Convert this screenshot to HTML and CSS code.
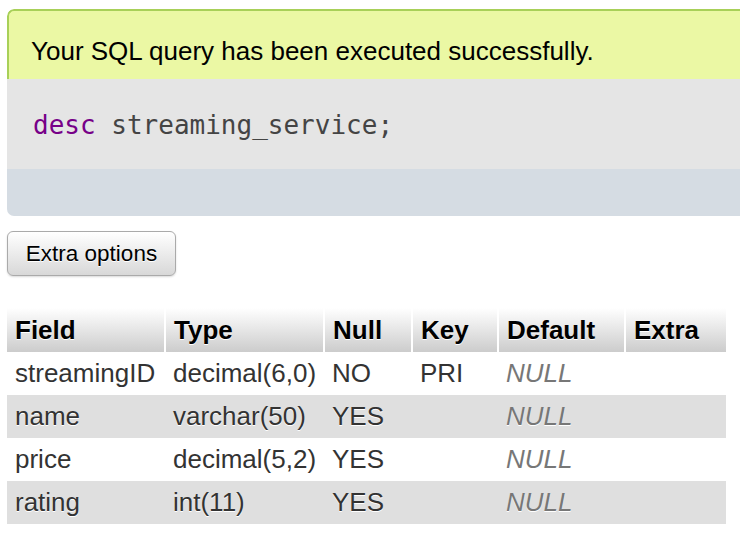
FILE: index.html
```html
<!DOCTYPE html>
<html>
<head>
<meta charset="utf-8">
<link rel="stylesheet" href="styles.css">
</head>
<body>
<div class="page">
  <div class="result">
    <div class="success">Your SQL query has been executed successfully.</div>
    <div class="sql"><div class="code"><span class="kw">desc</span> streaming_service;</div></div>
    <div class="tools"></div>
  </div>
  <button class="btn" type="button">Extra options</button>
  <table class="data">
    <thead>
      <tr>
        <th class="c-field">Field</th>
        <th class="c-type">Type</th>
        <th class="c-null">Null</th>
        <th class="c-key">Key</th>
        <th class="c-def">Default</th>
        <th class="c-extra">Extra</th>
      </tr>
    </thead>
    <tbody>
      <tr><td>streamingID</td><td>decimal(6,0)</td><td>NO</td><td>PRI</td><td class="null">NULL</td><td></td></tr>
      <tr class="even"><td>name</td><td>varchar(50)</td><td>YES</td><td></td><td class="null">NULL</td><td></td></tr>
      <tr><td>price</td><td>decimal(5,2)</td><td>YES</td><td></td><td class="null">NULL</td><td></td></tr>
      <tr class="even"><td>rating</td><td>int(11)</td><td>YES</td><td></td><td class="null">NULL</td><td></td></tr>
    </tbody>
  </table>
</div>
</body>
</html>
```

FILE: styles.css
```css
html, body {
  margin: 0;
  padding: 0;
  background: #fff;
  overflow: hidden;
}
body {
  font-family: "Liberation Sans", Arial, sans-serif;
  font-size: 26px;
  color: #000;
}
.page {
  padding: 9px 0 0 7px;
  display: flex;
  flex-direction: column;
  align-items: flex-start;
}
.result {
  width: 760px;
  border-radius: 7px 0 0 7px;
  overflow: hidden;
}
.success {
  background: #ebf8a4;
  border-top: 2px solid #a8d058;
  border-left: 2px solid #a8d058;
  border-top-left-radius: 7px;
  height: 70px;
  box-sizing: border-box;
  padding: 25px 0 0 22px;
  font-size: 26px;
  line-height: 30px;
  color: #000;
}
.sql {
  background: #e5e5e5;
  height: 90px;
  box-sizing: border-box;
  padding: 26px 0 0 26px;
}
.sql .code {
  font-family: "DejaVu Sans Mono", monospace;
  font-size: 26px;
  line-height: 40px;
  color: #444;
}
.sql .kw {
  color: #770088;
}
.tools {
  background: #d5dce3;
  height: 47px;
}
.btn {
  margin-top: 15px;
  width: 169px;
  height: 45px;
  padding: 0;
  font-family: "Liberation Sans", Arial, sans-serif;
  font-size: 22.5px;
  color: #000;
  text-shadow: 0 1px 0 #fff;
  background: linear-gradient(#ffffff, #d8d8d8);
  border: 1px solid #aaa;
  border-radius: 6px;
  box-shadow: 0 1px 2px rgba(0,0,0,0.15);
}
.data {
  margin-top: 32px;
  border-collapse: collapse;
  border-spacing: 0;
  width: 719px;
  table-layout: fixed;
}
.data th {
  height: 44px;
  box-sizing: border-box;
  padding: 0 0 0 8px;
  text-align: left;
  font-weight: bold;
  color: #000;
  text-shadow: 0 1px 0 #fff;
  background: linear-gradient(#ffffff, #cccccc);
  border-right: 2px solid #fff;
}
.data th.c-extra { border-right: 0; }
.c-field { width: 158px; }
.c-type { width: 159px; }
.c-null { width: 88px; }
.c-key { width: 86px; }
.c-def { width: 127px; }
.c-extra { width: 101px; }
.data td {
  height: 43px;
  box-sizing: border-box;
  padding: 0 0 0 8px;
  color: #333;
  text-shadow: 0 1px 0 #fff;
  white-space: nowrap;
}
.data tr.even td {
  background: #dfdfdf;
}
.data td.null {
  font-style: italic;
  color: #777;
}
```
